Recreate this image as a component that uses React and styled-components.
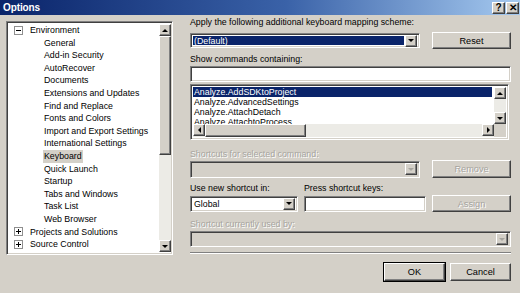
import React from "react";
import styled, { createGlobalStyle, css } from "styled-components";

const GlobalStyle = createGlobalStyle`
  html, body {
    margin: 0;
    padding: 0;
    background: #d4d0c8;
  }
  body {
    font-family: "Liberation Sans", Arial, sans-serif;
    font-size: 8.8px;
    color: #000;
  }
`;

const raised = css`
  background: #d4d0c8;
  border-top: 1px solid #fff;
  border-left: 1px solid #fff;
  border-right: 1px solid #404040;
  border-bottom: 1px solid #404040;
  box-shadow: inset -1px -1px 0 #808080;
`;

const sunken = css`
  border-top: 1px solid #808080;
  border-left: 1px solid #808080;
  border-right: 1px solid #fff;
  border-bottom: 1px solid #fff;
  box-shadow: inset 1px 1px 0 #404040, inset -1px -1px 0 #d4d0c8;
`;

const disabledText = css`
  color: #a7a59f;
  text-shadow: 1px 1px 0 #fff;
`;

const Window = styled.div`
  width: 520px;
  height: 293px;
  display: flex;
  flex-direction: column;
  background: #d4d0c8;
  overflow: hidden;
  box-sizing: border-box;
`;

const TitleBar = styled.div`
  height: 15px;
  flex: none;
  display: flex;
  align-items: center;
  justify-content: space-between;
  padding: 0 1px 0 3px;
  background: linear-gradient(to right, #0a246a 0%, #3a62a8 55%, #a6caf0 100%);
`;

const Title = styled.span`
  color: #fff;
  font-weight: bold;
  font-size: 10px;
  letter-spacing: -0.1px;
`;

const CaptionButtons = styled.div`
  display: flex;
  gap: 1px;
`;

const CaptionButton = styled.div`
  ${raised};
  width: 13px;
  height: 12px;
  box-sizing: border-box;
  display: flex;
  align-items: center;
  justify-content: center;
  font-weight: bold;
  font-size: 10px;
  line-height: 1;
`;

const Body = styled.div`
  flex: 1;
  display: grid;
  grid-template-columns: 167px minmax(0, 1fr);
  grid-template-rows: auto auto;
  align-items: start;
  align-content: start;
  column-gap: 17px;
  row-gap: 8px;
  padding: 2px 9px 0 6px;
`;

const Tree = styled.div`
  ${sunken};
  margin-top: 4px;
  height: 234px;
  background: #fff;
  display: flex;
  box-sizing: border-box;
  padding: 2px 1px 2px 2px;
`;

const TreeItems = styled.div`
  flex: 1;
`;

const TreeRow = styled.div`
  height: 12.6px;
  line-height: 12.6px;
  display: flex;
  align-items: center;
  padding-left: ${(p) => (p.$child ? 34 : 5)}px;
  white-space: nowrap;
`;

const TreeLabel = styled.span`
  padding: 0 1px;
  background: ${(p) => (p.$selected ? "#d4d0c8" : "transparent")};
`;

const Expander = styled.svg`
  width: 9px;
  height: 9px;
  margin-right: 6px;
  flex: none;
`;

const VScroll = styled.div`
  width: 12px;
  display: flex;
  flex-direction: column;
  background: #ecebe6;
`;

const ArrowButton = styled.div`
  ${raised};
  width: 12px;
  height: 12px;
  box-sizing: border-box;
  display: flex;
  align-items: center;
  justify-content: center;
  flex: none;
`;

const Thumb = styled.div`
  ${raised};
  box-sizing: border-box;
  flex: none;
  ${(p) =>
    p.$horizontal
      ? css`
          width: ${p.$size}px;
        `
      : css`
          height: ${p.$size}px;
        `}
`;

const Track = styled.div`
  flex: 1;
  background: #ecebe6;
`;

const Right = styled.div`
  display: flex;
  flex-direction: column;
`;

const Label = styled.div`
  height: 11px;
  line-height: 11px;
  margin-top: ${(p) => p.$top || 0}px;
  width: ${(p) => (p.$w ? `${p.$w}px` : "auto")};
  white-space: nowrap;
  ${(p) => p.$disabled && disabledText}
`;

const Row = styled.div`
  display: flex;
  align-items: center;
  gap: ${(p) => p.$gap || 12}px;
  margin-top: ${(p) => p.$top || 0}px;
`;

const Field = styled.div`
  ${sunken};
  box-sizing: border-box;
  height: ${(p) => p.$h || 16}px;
  width: ${(p) => (p.$w ? `${p.$w}px` : "auto")};
  flex: none;
  background: ${(p) => (p.$disabled ? "#d4d0c8" : "#fff")};
  display: flex;
  align-items: center;
  padding: 2px;
  margin-top: ${(p) => p.$top || 0}px;
`;

const ComboText = styled.div`
  flex: 1;
  height: 100%;
  line-height: 10px;
  padding-left: 1px;
  color: ${(p) => (p.$selected ? "#fff" : "#000")};
  background: ${(p) => (p.$selected ? "#0a246a" : "transparent")};
  margin-right: 1px;
`;

const Button = styled.div`
  ${raised};
  box-sizing: border-box;
  width: ${(p) => p.$w || 79}px;
  height: ${(p) => p.$h || 17}px;
  flex: none;
  display: flex;
  align-items: center;
  justify-content: center;
  font-size: 9.2px;
  ${(p) => p.$disabled && disabledText}
  ${(p) =>
    p.$default &&
    css`
      outline: 1px solid #000;
    `}
`;

const ListBox = styled.div`
  ${sunken};
  box-sizing: border-box;
  height: 56px;
  margin-top: 2px;
  margin-right: 2px;
  display: grid;
  grid-template-columns: 1fr 12px;
  grid-template-rows: 1fr 13px;
  padding: 2px;
  background: #fff;
`;

const ListItems = styled.div`
  overflow: hidden;
  padding-right: 2px;
`;

const ListItem = styled.div`
  height: 10px;
  line-height: 10px;
  padding-left: 1px;
  white-space: nowrap;
  color: ${(p) => (p.$selected ? "#fff" : "#000")};
  background: ${(p) => (p.$selected ? "#0a246a" : "transparent")};
`;

const HScroll = styled.div`
  display: flex;
  background: #ecebe6;
`;

const Corner = styled.div`
  background: #d4d0c8;
`;

const Separator = styled.div`
  height: 0;
  margin-top: 5px;
  border-top: 1px solid #808080;
  border-bottom: 1px solid #fff;
`;

const Footer = styled.div`
  grid-column: 1 / span 2;
  display: flex;
  justify-content: flex-end;
  gap: 5px;
`;

const Tri = ({ dir = "down", color = "#000" }) => {
  const pts = {
    down: "0,0 6,0 3,3",
    up: "0,3 6,3 3,0",
    left: "3,0 3,6 0,3",
    right: "0,0 0,6 3,3",
  }[dir];
  const vertical = dir === "up" || dir === "down";
  return (
    <svg width={vertical ? 6 : 3} height={vertical ? 3 : 6} viewBox={vertical ? "0 0 6 3" : "0 0 3 6"}>
      <polygon points={pts} fill={color} />
    </svg>
  );
};

const DropButton = ({ disabled }) => (
  <ArrowButton>
    <Tri dir="down" color={disabled ? "#a7a59f" : "#000"} />
  </ArrowButton>
);

const Box = ({ plus }) => (
  <Expander viewBox="0 0 9 9">
    <rect x="0.5" y="0.5" width="8" height="8" fill="#fff" stroke="#8f8f8f" />
    <line x1="2" y1="4.5" x2="7" y2="4.5" stroke="#000" />
    {plus && <line x1="4.5" y1="2" x2="4.5" y2="7" stroke="#000" />}
  </Expander>
);

const environment = [
  "General",
  "Add-in Security",
  "AutoRecover",
  "Documents",
  "Extensions and Updates",
  "Find and Replace",
  "Fonts and Colors",
  "Import and Export Settings",
  "International Settings",
  "Keyboard",
  "Quick Launch",
  "Startup",
  "Tabs and Windows",
  "Task List",
  "Web Browser",
];

const commands = [
  "Analyze.AddSDKtoProject",
  "Analyze.AdvancedSettings",
  "Analyze.AttachDetach",
  "Analyze.AttachtoProcess",
];

export default function App() {
  return (
    <>
      <GlobalStyle />
      <Window>
        <TitleBar>
          <Title>Options</Title>
          <CaptionButtons>
            <CaptionButton>?</CaptionButton>
            <CaptionButton>✕</CaptionButton>
          </CaptionButtons>
        </TitleBar>
        <Body>
          <Tree>
            <TreeItems>
              <TreeRow>
                <Box />
                <TreeLabel>Environment</TreeLabel>
              </TreeRow>
              {environment.map((name) => (
                <TreeRow key={name} $child>
                  <TreeLabel $selected={name === "Keyboard"}>{name}</TreeLabel>
                </TreeRow>
              ))}
              <TreeRow>
                <Box plus />
                <TreeLabel>Projects and Solutions</TreeLabel>
              </TreeRow>
              <TreeRow>
                <Box plus />
                <TreeLabel>Source Control</TreeLabel>
              </TreeRow>
            </TreeItems>
            <VScroll>
              <ArrowButton>
                <Tri dir="up" />
              </ArrowButton>
              <Thumb $size={119} />
              <Track />
              <ArrowButton>
                <Tri dir="down" />
              </ArrowButton>
            </VScroll>
          </Tree>

          <Right>
            <Label>Apply the following additional keyboard mapping scheme:</Label>
            <Row $top={4}>
              <Field $w={230} $h={15}>
                <ComboText $selected>(Default)</ComboText>
                <DropButton />
              </Field>
              <Button>Reset</Button>
            </Row>
            <Label $top={5}>Show commands containing:</Label>
            <Field $top={1} $h={16} />
            <ListBox>
              <ListItems>
                {commands.map((c, i) => (
                  <ListItem key={c} $selected={i === 0}>
                    {c}
                  </ListItem>
                ))}
              </ListItems>
              <VScroll>
                <ArrowButton>
                  <Tri dir="up" />
                </ArrowButton>
                <Track />
                <ArrowButton>
                  <Tri dir="down" />
                </ArrowButton>
              </VScroll>
              <HScroll>
                <ArrowButton>
                  <Tri dir="left" />
                </ArrowButton>
                <Thumb $horizontal $size={101} />
                <Track />
                <ArrowButton>
                  <Tri dir="right" />
                </ArrowButton>
              </HScroll>
              <Corner />
            </ListBox>

            <Label $top={9} $disabled>
              Shortcuts for selected command:
            </Label>
            <Row $top={0}>
              <Field $w={230} $h={17} $disabled>
                <ComboText />
                <DropButton disabled />
              </Field>
              <Button $h={18} $disabled>
                Remove
              </Button>
            </Row>
            <Row $top={5} $gap={6}>
              <Label $w={108}>Use new shortcut in:</Label>
              <Label>Press shortcut keys:</Label>
            </Row>
            <Row $top={1} $gap={6}>
              <Field $w={108} $h={16}>
                <ComboText>Global</ComboText>
                <DropButton />
              </Field>
              <Field $w={122} $h={16} />
              <Button $disabled>Assign</Button>
            </Row>
            <Label $top={7} $disabled>
              Shortcut currently used by:
            </Label>
            <Field $top={1} $h={16} $disabled>
              <ComboText />
              <DropButton disabled />
            </Field>
            <Separator />
          </Right>

          <Footer>
            <Button $w={61} $h={18} $default>
              OK
            </Button>
            <Button $w={61} $h={18}>
              Cancel
            </Button>
          </Footer>
        </Body>
      </Window>
    </>
  );
}
